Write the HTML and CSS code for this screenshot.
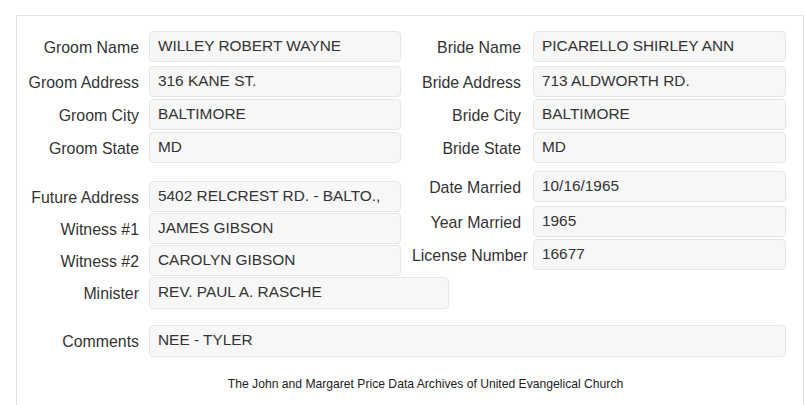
FILE: index.html
```html
<!DOCTYPE html>
<html lang="en">
<head>
<meta charset="utf-8">
<title>Marriage Record</title>
<link rel="stylesheet" href="styles.css">
</head>
<body>
<div class="panel">
  <div class="section top">
    <div class="col col-left stack">
      <div class="row"><span class="label">Groom Name</span><span class="field">WILLEY ROBERT WAYNE</span></div>
      <div class="row"><span class="label">Groom Address</span><span class="field">316 KANE ST.</span></div>
      <div class="row"><span class="label">Groom City</span><span class="field">BALTIMORE</span></div>
      <div class="row"><span class="label">Groom State</span><span class="field">MD</span></div>
    </div>
    <div class="col col-right stack">
      <div class="row"><span class="label">Bride Name</span><span class="field">PICARELLO SHIRLEY ANN</span></div>
      <div class="row"><span class="label">Bride Address</span><span class="field">713 ALDWORTH RD.</span></div>
      <div class="row"><span class="label">Bride City</span><span class="field">BALTIMORE</span></div>
      <div class="row"><span class="label">Bride State</span><span class="field">MD</span></div>
    </div>
  </div>
  <div class="section lower">
    <div class="col col-left stack tight">
      <div class="row"><span class="label">Future Address</span><span class="field">5402 RELCREST RD. - BALTO.,</span></div>
      <div class="row"><span class="label">Witness #1</span><span class="field">JAMES GIBSON</span></div>
      <div class="row"><span class="label">Witness #2</span><span class="field">CAROLYN GIBSON</span></div>
    </div>
    <div class="col col-right stack">
      <div class="row"><span class="label">Date Married</span><span class="field">10/16/1965</span></div>
      <div class="row"><span class="label">Year Married</span><span class="field">1965</span></div>
      <div class="row"><span class="label">License Number</span><span class="field">16677</span></div>
    </div>
  </div>
  <div class="row minister"><span class="label">Minister</span><span class="field wide">REV. PAUL A. RASCHE</span></div>
  <div class="row comments"><span class="label">Comments</span><span class="field full">NEE - TYLER</span></div>
  <p class="footer">The John and Margaret Price Data Archives of United Evangelical Church</p>
</div>
</body>
</html>
```

FILE: styles.css
```css
html, body {
  margin: 0;
  padding: 0;
  background: #ffffff;
}

body {
  font-family: "Liberation Sans", Arial, sans-serif;
  color: #333333;
  font-size: 15.4px;
}

.panel {
  box-sizing: border-box;
  margin: 15px 0 0 16px;
  width: 788px;
  height: 391px;
  border: 1px solid #e3e3e3;
  padding: 15px 17px 0 0;
  overflow: hidden;
}

.section {
  display: grid;
  grid-template-columns: 384px 385px;
  align-items: start;
}

.lower {
  margin-top: 8px;
}

.stack {
  display: flex;
  flex-direction: column;
  gap: 2px;
}

.stack > .row:first-child {
  margin-bottom: 2px;
}

.stack.tight {
  gap: 1px;
  padding-top: 10px;
}

.stack.tight > .row:first-child {
  margin-bottom: 0;
}

.row {
  display: flex;
  align-items: center;
}

.label {
  flex: 0 0 auto;
  white-space: nowrap;
  text-align: right;
  font-size: 15.9px;
  line-height: 18px;
  padding-top: 2px;
}

.col-left .label,
.minister .label,
.comments .label {
  width: 122px;
  margin-right: 10px;
}

.col-right {
  padding-left: 11px;
}

.col-right .label {
  width: 109px;
  margin-right: 12px;
}

.field {
  box-sizing: border-box;
  height: 31px;
  flex: 1 1 auto;
  background: #f7f7f7;
  border: 1px solid #e6e6e6;
  border-radius: 4px;
  padding: 0 8px;
  line-height: 28px;
  white-space: nowrap;
  overflow: hidden;
}

.field.wide {
  flex: 0 0 300px;
  width: 300px;
  height: 32px;
}

.minister {
  margin-top: 1px;
}

.comments {
  margin-top: 16px;
}

.field.full {
  height: 32px;
}

.footer {
  margin: 20px 0 0 0;
  padding-left: 48px;
  text-align: center;
  font-size: 12.15px;
  color: #222222;
}
```
